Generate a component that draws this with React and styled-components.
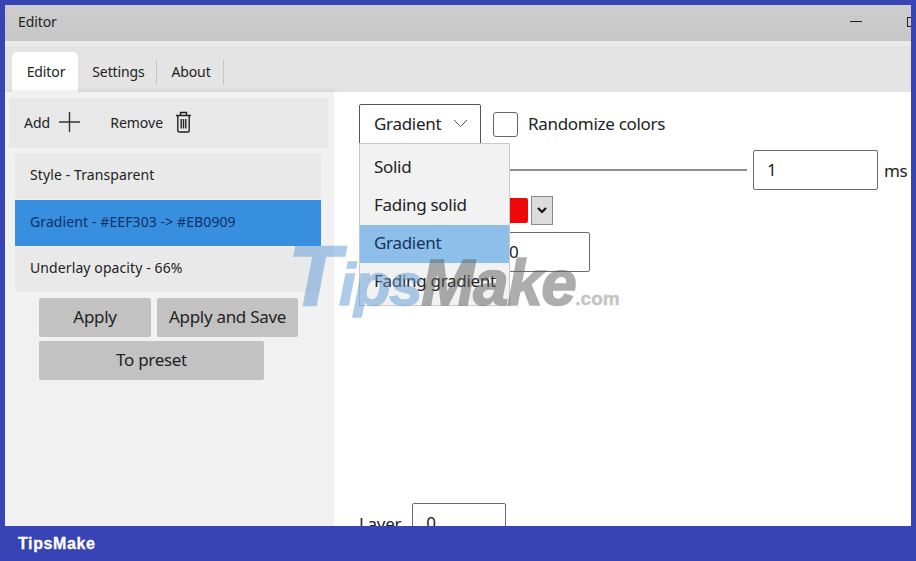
import React from 'react'
import styled, { createGlobalStyle } from 'styled-components'

const GlobalStyle = createGlobalStyle`
  html, body {
    margin: 0;
    padding: 0;
    background: #3843b5;
  }
  * {
    box-sizing: border-box;
  }
`

const Page = styled.div`
  position: relative;
  display: flex;
  flex-direction: column;
  width: 916px;
  height: 561px;
  overflow: hidden;
  background: #3843b5;
  font-family: 'Noto Sans', 'Open Sans', sans-serif;
  color: #222;
`

const Frame = styled.div`
  display: flex;
  flex-direction: column;
  width: 906px;
  height: 521px;
  margin: 5px 5px 0;
  overflow: hidden;
  background: #fff;
`

const TitleBar = styled.div`
  display: flex;
  align-items: center;
  flex: 0 0 36px;
  padding: 0 0 3px 13px;
  background: linear-gradient(#cdcdcd, #c6c6c6);
  font-size: 14px;
`

const WindowTitle = styled.span`
  flex: 1;
  letter-spacing: -0.1px;
`

const MinimizeGlyph = styled.span`
  width: 12px;
  height: 1px;
  margin-right: 45px;
  background: #222;
`

const MaximizeGlyph = styled.span`
  flex: 0 0 10px;
  height: 10px;
  margin-right: -6px;
  border: 1px solid #222;
`

const TabBar = styled.div`
  display: flex;
  align-items: flex-end;
  flex: 0 0 51px;
  padding-left: 7px;
  border-top: 5px solid #ebebeb;
  background: #e4e4e4;
`

const Tab = styled.div`
  display: flex;
  align-items: center;
  justify-content: center;
  width: ${p => p.$width}px;
  height: 40px;
  padding: 0 0 2px ${p => p.$shift}px;
  border-radius: 5px 5px 0 0;
  background: ${p => (p.$active ? '#fff' : 'transparent')};
  font-size: 14px;
  letter-spacing: -0.1px;
`

const TabDivider = styled.span`
  width: 1px;
  height: 25px;
  margin-bottom: 7px;
  background: #c4c4c4;
`

const Body = styled.div`
  display: flex;
  flex: 1;
  min-height: 0;
`

const Sidebar = styled.aside`
  display: flex;
  flex-direction: column;
  flex: 0 0 329px;
  padding: 6px 6px 0 4px;
  background: #f1f1f1;
  box-shadow: 3px 0 6px rgba(0, 0, 0, 0.14);
`

const Toolbar = styled.div`
  display: flex;
  align-items: center;
  height: 50px;
  padding: 0 0 0 15px;
  background: #e8e8e8;
  font-size: 14px;
`

const ToolButton = styled.div`
  display: flex;
  align-items: center;
  gap: ${p => p.$gap}px;
  margin-right: ${p => p.$after}px;
  padding-bottom: 2px;
`

const LayerList = styled.div`
  display: flex;
  flex-direction: column;
  gap: 1px;
  margin: 5px 7px 0 6px;
`

const LayerRow = styled.div`
  display: flex;
  align-items: center;
  height: 46px;
  padding: 0 0 3px 15px;
  background: ${p => (p.$selected ? '#388fdf' : '#e9e9e9')};
  color: ${p => (p.$selected ? '#0c2f66' : '#222')};
  font-size: 14px;
  letter-spacing: 0.1px;

  &:last-child {
    height: 45px;
    padding-bottom: 4px;
  }
`

const ActionRow = styled.div`
  display: flex;
  gap: 6px;
  margin: ${p => p.$top}px 0 0 30px;
`

const ActionButton = styled.div`
  display: flex;
  align-items: center;
  justify-content: center;
  width: ${p => p.$width}px;
  height: 39px;
  padding-bottom: 2px;
  border-radius: 2px;
  background: #c2c2c2;
  font-size: 17px;
  letter-spacing: -0.3px;
`

const Main = styled.main`
  position: relative;
  display: flex;
  flex-direction: column;
  flex: 1;
  min-width: 0;
  padding: 12px 0 0 25px;
  background: #fff;
  font-size: 17px;
  letter-spacing: -0.3px;
`

const TopRow = styled.div`
  display: flex;
  align-items: center;
  height: 40px;
`

const Combo = styled.div`
  display: flex;
  align-items: center;
  justify-content: space-between;
  width: 122px;
  height: 40px;
  padding: 0 12px 2px 14px;
  border: 1px solid #555;
  border-radius: 2px 2px 0 0;
`

const CheckLabel = styled.span`
  padding-bottom: 2px;
`

const CheckBox = styled.span`
  width: 25px;
  height: 25px;
  margin: 0 10px 0 12px;
  border: 1px solid #666;
  border-radius: 3px;
`

const SliderRow = styled.div`
  display: flex;
  align-items: center;
  height: 40px;
  margin-top: 6px;
  padding-left: 61px;
`

const SliderTrack = styled.span`
  width: 327px;
  height: 2px;
  margin-right: 6px;
  background: #8f8f8f;
`

const Field = styled.div`
  display: flex;
  align-items: center;
  flex: 0 0 ${p => p.$width}px;
  height: 40px;
  padding: 0 0 2px ${p => p.$pad}px;
  border: 1px solid #6b6b6b;
  border-radius: 2px;
  background: #fff;
`

const Unit = styled.span`
  margin-left: 6px;
`

const ColorRow = styled.div`
  display: flex;
  align-items: center;
  gap: 3px;
  height: 29px;
  margin-top: 6px;
  padding-left: 125px;
`

const Swatch = styled.span`
  width: 44px;
  height: 25px;
  border-radius: 2px;
  background: #ee0a0a;
`

const ColorArrow = styled.span`
  display: flex;
  align-items: center;
  justify-content: center;
  width: 22px;
  height: 29px;
  border: 1px solid #8a8a8a;
  background: #dcdcdc;
`

const ValueRow = styled.div`
  display: flex;
  margin-top: 7px;
  padding-left: 116px;
`

const LayerField = styled.div`
  display: flex;
  align-items: center;
  gap: 11px;
  margin-top: 231px;
`

const Dropdown = styled.div`
  position: absolute;
  top: 51px;
  left: 25px;
  width: 151px;
  height: 163px;
  padding-top: 5px;
  border: 1px solid #c9c9c9;
  background: #f2f2f2;
`

const DropdownItem = styled.div`
  display: flex;
  align-items: center;
  height: 38px;
  padding: 0 0 3px 14px;
  background: ${p => (p.$active ? '#8dbfea' : 'transparent')};
  color: ${p => (p.$active ? '#14345c' : '#222')};
`

const Watermark = styled.div`
  position: absolute;
  top: 226px;
  left: 288px;
  display: flex;
  align-items: baseline;
  height: 80px;
  opacity: 0.5;
  font-family: 'Liberation Sans', Arial, sans-serif;
  font-weight: 700;
  pointer-events: none;
`

const WatermarkPart = styled.span`
  color: ${p => p.$color};
  font-size: ${p => p.$size}px;
  font-style: ${p => (p.$upright ? 'normal' : 'italic')};
  letter-spacing: ${p => (p.$upright ? '0' : '-1.5px')};
  -webkit-text-stroke: ${p => (p.$upright ? '0.4px' : '1.5px')} ${p => p.$color};
`

const Footer = styled.footer`
  display: flex;
  align-items: center;
  flex: 0 0 35px;
  padding-left: 18px;
  background: #3843b5;
  color: #fff;
  font-family: 'Liberation Sans', Arial, sans-serif;
  font-size: 16px;
  font-weight: 700;
  letter-spacing: 0.6px;
  -webkit-text-stroke: 0.3px #fff;
`

const PlusIcon = () => (
  <svg width="22" height="22" viewBox="0 0 22 22" fill="none" stroke="#333" strokeWidth="1.4">
    <path d="M0 11h21M10.5 1v20" />
  </svg>
)

const TrashIcon = () => (
  <svg width="17" height="22" viewBox="0 0 17 22" fill="none" stroke="#222" strokeWidth="1.4">
    <path d="M1 4.5h15M5.5 4.5V1.5h6v3M2.8 4.5v15.2a1.3 1.3 0 0 0 1.3 1.3h8.8a1.3 1.3 0 0 0 1.3-1.3V4.5" />
    <path d="M6.2 8v9.5M8.5 8v9.5M10.8 8v9.5" />
  </svg>
)

const ChevronIcon = () => (
  <svg width="15" height="9" viewBox="0 0 15 9" fill="none" stroke="#555" strokeWidth="1">
    <path d="M1 1l6.5 6.5L14 1" />
  </svg>
)

const SmallArrowIcon = () => (
  <svg width="10" height="7" viewBox="0 0 10 7" fill="none" stroke="#111" strokeWidth="2.2">
    <path d="M1 1l4 4 4-4" />
  </svg>
)

const layers = [
  { label: 'Style - Transparent' },
  { label: 'Gradient - #EEF303 -> #EB0909', selected: true },
  { label: 'Underlay opacity - 66%' }
]

const styleOptions = ['Solid', 'Fading solid', 'Gradient', 'Fading gradient']

const App = () => {
  return (
    <Page>
      <GlobalStyle />
      <Frame>
        <TitleBar>
          <WindowTitle>Editor</WindowTitle>
          <MinimizeGlyph />
          <MaximizeGlyph />
        </TitleBar>
        <TabBar>
          <Tab $active $width={66} $shift={2}>Editor</Tab>
          <Tab $width={78} $shift={3}>Settings</Tab>
          <TabDivider />
          <Tab $width={66} $shift={2}>About</Tab>
          <TabDivider />
        </TabBar>
        <Body>
          <Sidebar>
            <Toolbar>
              <ToolButton $gap={9} $after={29}>
                Add <PlusIcon />
              </ToolButton>
              <ToolButton $gap={12}>
                Remove <TrashIcon />
              </ToolButton>
            </Toolbar>
            <LayerList>
              {layers.map(({ label, selected }) => (
                <LayerRow key={label} $selected={selected}>{label}</LayerRow>
              ))}
            </LayerList>
            <ActionRow $top={6}>
              <ActionButton $width={112}>Apply</ActionButton>
              <ActionButton $width={141}>Apply and Save</ActionButton>
            </ActionRow>
            <ActionRow $top={4}>
              <ActionButton $width={225}>To preset</ActionButton>
            </ActionRow>
          </Sidebar>
          <Main>
            <TopRow>
              <Combo>
                Gradient <ChevronIcon />
              </Combo>
              <CheckBox />
              <CheckLabel>Randomize colors</CheckLabel>
            </TopRow>
            <SliderRow>
              <SliderTrack />
              <Field $width={125} $pad={13}>1</Field>
              <Unit>ms</Unit>
            </SliderRow>
            <ColorRow>
              <Swatch />
              <ColorArrow><SmallArrowIcon /></ColorArrow>
            </ColorRow>
            <ValueRow>
              <Field $width={115} $pad={33}>0</Field>
            </ValueRow>
            <LayerField>
              Layer
              <Field $width={94} $pad={13}>0</Field>
            </LayerField>
            <Dropdown>
              {styleOptions.map(option => (
                <DropdownItem key={option} $active={option === 'Gradient'}>{option}</DropdownItem>
              ))}
            </Dropdown>
          </Main>
        </Body>
      </Frame>
      <Footer>TipsMake</Footer>
      <Watermark>
        <WatermarkPart $color="#5f9bd6" $size={86}>T</WatermarkPart>
        <WatermarkPart $color="#5f9bd6" $size={60}>ips</WatermarkPart>
        <WatermarkPart $color="#5e5e5e" $size={64}>Make</WatermarkPart>
        <WatermarkPart $color="#8a8a8a" $size={19} $upright>.com</WatermarkPart>
      </Watermark>
    </Page>
  )
}

export default App
